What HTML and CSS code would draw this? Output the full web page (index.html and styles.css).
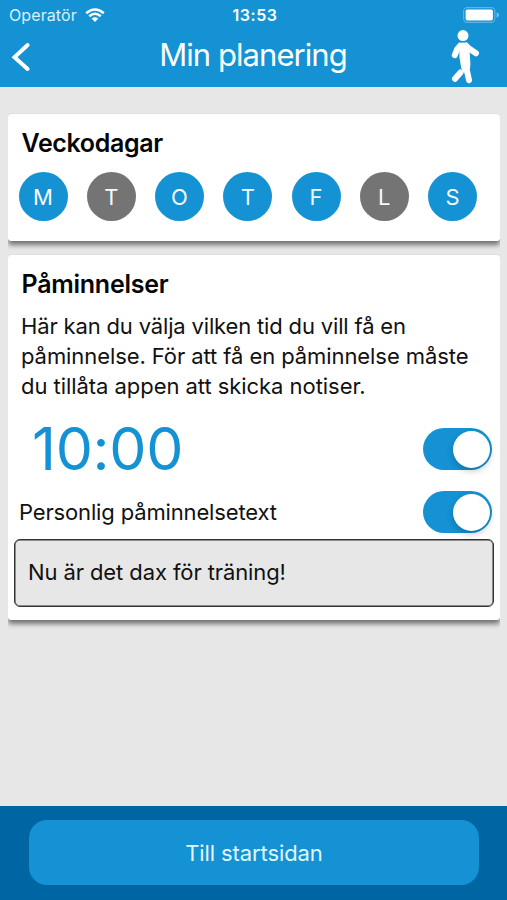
FILE: index.html
```html
<!DOCTYPE html>
<html lang="sv">
<head>
<meta charset="utf-8">
<meta name="viewport" content="width=device-width">
<title>Min planering</title>
<link rel="stylesheet" href="styles.css">
</head>
<body>
<div class="app">
  <header class="header">
    <div class="status">
      <div class="carrier"><span class="operator">Operatör</span>
        <svg class="wifi" viewBox="0 0 20 14" aria-hidden="true"><path d="M1.2 5.2Q10-2.3 18.8 5.2M4.3 8.3Q10 3.3 15.7 8.3" fill="none" stroke="#fff" stroke-width="2.5"/><path d="M6.6 10.5Q10 7.8 13.4 10.5L10 13.9Z" fill="#fff"/></svg>
      </div>
      <span class="clock">13:53</span>
      <svg class="battery" viewBox="0 0 37 16" aria-hidden="true"><rect x=".6" y=".6" width="31.3" height="14.8" rx="3.8" fill="none" stroke="#5fb5e3" stroke-width="1.1"/><rect x="2.6" y="2.6" width="27.3" height="10.8" rx="1.7" fill="#fff"/><path d="M33.7 5.3Q36 6.2 36 8T33.7 10.7Z" fill="#79c3eb"/></svg>
    </div>
    <div class="navbar">
      <svg class="back" viewBox="0 0 20 30" aria-hidden="true"><path d="M16.6 3L3.5 15.2L16.6 27" fill="none" stroke="#fff" stroke-width="4" stroke-linecap="round" stroke-linejoin="miter"/></svg>
      <h1 class="title">Min planering</h1>
      <svg class="walker" viewBox="0 0 30 56" aria-hidden="true"><circle cx="13" cy="5.6" r="5.5" fill="#fff"/><g fill="none" stroke="#fff" stroke-width="6" stroke-linecap="round" stroke-linejoin="round"><path d="M10 15.8L7 19.5L4.8 25.2"/><path d="M16 15.5L19 18.5L26 23.3"/><path d="M16 34L16.6 39L19 50.2"/><path d="M10.5 42.5L5 48.8"/></g><path d="M8 14.5Q13 10.5 18 14.5L19.6 21L20.4 34L20 39L14 43L11.2 38L9.4 27V20Z" fill="#fff"/></svg>
    </div>
  </header>
  <main class="content">
    <section class="card days-card">
      <h2 class="heading heading-days">Veckodagar</h2>
      <div class="days">
        <span class="day">M</span><span class="day off">T</span><span class="day">O</span><span class="day">T</span><span class="day">F</span><span class="day off">L</span><span class="day">S</span>
      </div>
    </section>
    <section class="card reminders-card">
      <h2 class="heading heading-reminders">Påminnelser</h2>
      <p class="description"><span class="line-a">Här kan du välja vilken tid du vill få en</span><br><span class="line-b">påminnelse. För att få en påminnelse måste</span><br><span class="line-c">du tillåta appen att skicka notiser.</span></p>
      <div class="row time-row"><span class="time">10:00</span><span class="toggle"><span class="knob"></span></span></div>
      <div class="row text-row"><span class="label">Personlig påminnelsetext</span><span class="toggle"><span class="knob"></span></span></div>
      <div class="message"><span class="message-text">Nu är det dax för träning!</span></div>
    </section>
  </main>
  <footer class="footer"><button class="start">Till startsidan</button></footer>
</div>
</body>
</html>
```
FILE: styles.css
```css
* { box-sizing: border-box; }
body { margin: 0; font-family: Inter, "Liberation Sans", sans-serif; color: #111; }
.app { width: 507px; height: 900px; display: flex; flex-direction: column; background: #e7e7e7; overflow: hidden; }
.header { height: 87px; flex: none; background: #1492d4; color: #fff; }
.status { height: 30px; display: grid; grid-template-columns: 1fr auto 1fr; align-items: center; padding: 0 7px 0 9px; }
.carrier { display: flex; align-items: center; gap: 8px; }
.operator { font-size: 16px; line-height: 20px; letter-spacing: 0.1px; color: #d9f1fc; }
.wifi { width: 20px; height: 14px; }
.clock { margin-left: 1px; font-size: 16px; line-height: 20px; font-weight: 600; letter-spacing: 0.5px; }
.battery { width: 37px; height: 16px; justify-self: end; }
.navbar { height: 57px; display: grid; grid-template-columns: 1fr auto 1fr; align-items: start; padding: 0 27px 0 11px; }
.back { width: 20px; height: 30px; margin-top: 12px; }
.title { margin: 5px 0 0 15px; font-size: 31px; line-height: 40px; font-weight: 400; letter-spacing: -0.95px; }
.walker { width: 30px; height: 56px; justify-self: end; }
.content { flex: 1; padding: 27px 7px 0 8px; }
.card { background: #fff; border-radius: 3px; box-shadow: 0 4px 5px rgba(0,0,0,.5), 0 0 1px rgba(0,0,0,.15); clip-path: inset(-1px 0 -12px 0); }
.days-card { height: 127px; padding: 14px 23px 0 10.5px; }
.heading { margin: 0 0 0 3px; font-size: 25px; line-height: 30px; font-weight: 600; color: #050505; white-space: nowrap; }
.heading-days { letter-spacing: -0.35px; }
.days { display: flex; justify-content: space-between; margin-top: 14px; }
.day { width: 49px; height: 49px; border-radius: 50%; display: flex; align-items: center; justify-content: center; background: #1492d4; color: #f4faff; font-size: 22px; }
.off { background: #747474; }
.reminders-card { height: 365px; margin-top: 14px; padding: 14px 6px 0 6px; }
.heading-reminders { margin-left: 7.5px; letter-spacing: -0.25px; }
.description { margin: 13.4px 0 0 7px; font-size: 22px; line-height: 29.6px; white-space: nowrap; }
.line-a { letter-spacing: -0.16px; }
.line-b { letter-spacing: -0.08px; }
.line-c { letter-spacing: -0.05px; }
.row { display: flex; align-items: center; justify-content: space-between; padding-right: 2px; }
.time-row { height: 62px; margin-top: 17px; }
.time { margin-left: 18px; font-size: 59px; line-height: 62px; font-weight: 400; letter-spacing: -0.3px; color: #1492d4; }
.text-row { height: 64px; }
.label { margin-left: 5px; font-size: 22px; letter-spacing: -0.15px; }
.toggle { width: 69px; height: 42px; border-radius: 21px; background: #1492d4; display: flex; align-items: center; justify-content: flex-end; padding-right: 2px; }
.knob { width: 37px; height: 37px; border-radius: 50%; background: #fff; box-shadow: 0 3px 7px rgba(0,0,0,.22); }
.message { height: 68px; margin-top: -5px; border: 1px solid #333; box-shadow: inset 0 0 0 .5px #333; border-radius: 6px; background: #e7e7e7; display: flex; align-items: center; padding: 0 13px 2px; }
.message-text { font-size: 22px; letter-spacing: -0.1px; }
.footer { height: 94px; flex: none; background: #0065a3; padding: 14px 28px 0 29px; }
.start { display: block; width: 100%; height: 65px; border: 0; border-radius: 18px; background: #1492d4; color: #e0f6ff; font: 400 22px Inter, "Liberation Sans", sans-serif; letter-spacing: -0.1px; padding: 0; }
```
